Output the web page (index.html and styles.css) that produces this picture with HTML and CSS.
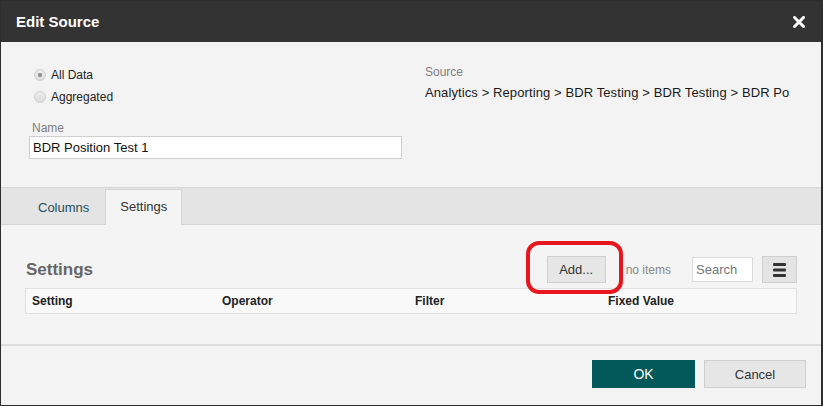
FILE: index.html
```html
<!DOCTYPE html>
<html>
<head>
<meta charset="utf-8">
<link rel="stylesheet" href="styles.css">
</head>
<body>
<div class="dialog">
  <div class="header">
    <span class="title">Edit Source</span>
    <svg class="close" width="12" height="12" viewBox="0 0 12 12"><path d="M1.5 1.5 L10.5 10.5 M10.5 1.5 L1.5 10.5" stroke="#fff" stroke-width="3" stroke-linecap="square"/></svg>
  </div>
  <div class="top">
    <div class="left">
      <div class="radio-row"><span class="radio checked"></span><span>All Data</span></div>
      <div class="radio-row"><span class="radio"></span><span>Aggregated</span></div>
      <div class="label name-label">Name</div>
      <div class="input name-input">BDR Position Test 1</div>
    </div>
    <div class="right">
      <div class="label">Source</div>
      <div class="path">Analytics &gt; Reporting &gt; BDR Testing &gt; BDR Testing &gt; BDR Position Test 1</div>
    </div>
  </div>
  <div class="tabs">
    <div class="tab">Columns</div>
    <div class="tab active">Settings</div>
  </div>
  <div class="content">
    <div class="toolbar">
      <div class="heading">Settings</div>
      <div class="add-wrap">
        <div class="btn add">Add...</div>
        <div class="annot"></div>
      </div>
      <div class="count">no items</div>
      <div class="search">Search</div>
      <div class="btn menu">
        <svg width="13" height="14" viewBox="0 0 13 14"><rect x="0" y="0" width="13" height="3" rx="1" fill="#333"/><rect x="0" y="5.5" width="13" height="3" rx="1" fill="#333"/><rect x="0" y="11" width="13" height="3" rx="1" fill="#333"/></svg>
      </div>
    </div>
    <div class="thead">
      <div class="th">Setting</div>
      <div class="th">Operator</div>
      <div class="th">Filter</div>
      <div class="th">Fixed Value</div>
    </div>
  </div>
  <div class="footer">
    <div class="btn ok">OK</div>
    <div class="btn cancel">Cancel</div>
  </div>
</div>
</body>
</html>
```

FILE: styles.css
```css
html, body {
  margin: 0;
  padding: 0;
  background: #2e2e2e;
  font-family: "Liberation Sans", Arial, sans-serif;
  color: #222;
}
.dialog {
  margin: 1px 0 0 1px;
  width: 820px;
  height: 404px;
  background: #f3f3f3;
  display: flex;
  flex-direction: column;
}
.header {
  height: 41px;
  flex: none;
  background: #333333;
  display: flex;
  align-items: center;
  justify-content: space-between;
  padding: 0 16px 0 15px;
}
.title {
  color: #fff;
  font-weight: bold;
  font-size: 15px;
}
.close { display: block; margin-top: 1px; }
.top {
  height: 145px;
  flex: none;
  display: flex;
}
.left {
  width: 373px;
  margin-left: 28px;
  padding-top: 22px;
}
.radio-row {
  height: 22px;
  display: flex;
  align-items: center;
  padding-left: 5px;
  font-size: 12px;
  color: #222;
}
.radio {
  width: 10px;
  height: 10px;
  border-radius: 50%;
  border: 1px solid #d0d0d0;
  background: linear-gradient(#ececec, #dcdcdc);
  margin-right: 5px;
  position: relative;
  flex: none;
}
.radio.checked::after {
  content: "";
  position: absolute;
  left: 3px;
  top: 3px;
  width: 4px;
  height: 4px;
  border-radius: 50%;
  background: #8a8a8a;
}
.label {
  font-size: 12px;
  color: #808080;
  line-height: 14px;
}
.name-label {
  margin-top: 13px;
  padding-left: 3px;
}
.input {
  background: #fff;
  border: 1px solid #cfcfcf;
  box-sizing: border-box;
}
.name-input {
  height: 23px;
  margin-top: 1px;
  font-size: 13px;
  line-height: 21px;
  padding-left: 3px;
  color: #111;
}
.right {
  margin-left: 23px;
  width: 365px;
  overflow: hidden;
  padding-top: 23px;
}
.path {
  margin-top: 6px;
  font-size: 13px;
  line-height: 16px;
  white-space: nowrap;
  letter-spacing: 0.1px;
  color: #1a1a1a;
}
.tabs {
  height: 36px;
  flex: none;
  background: #e4e4e4;
  border-top: 1px solid #d6d6d6;
  border-bottom: 1px solid #d6d6d6;
  display: flex;
  align-items: flex-end;
  padding-left: 21px;
}
.tab {
  height: 34px;
  box-sizing: border-box;
  padding: 0 15px;
  font-size: 13px;
  line-height: 34px;
  color: #1f4e5a;
  border: 1px solid transparent;
  border-bottom: none;
}
.tab.active {
  padding: 0 14px;
  background: #f4f4f4;
  border-color: #d4d4d4;
  color: #333;
  height: 36px;
  line-height: 33px;
  margin-bottom: -1px;
}
.content {
  flex: 1;
  background: #f4f4f4;
  padding: 31px 24px 0 24px;
  border-bottom: 2px solid #dedede;
}
.toolbar {
  display: flex;
  align-items: center;
  height: 27px;
}
.heading {
  flex: 1;
  font-size: 17px;
  font-weight: bold;
  color: #666;
  padding-left: 1px;
}
.btn {
  box-sizing: border-box;
  border: 1px solid #cfcfcf;
  background: #e6e6e6;
  font-size: 13px;
  color: #333;
  display: flex;
  align-items: center;
  justify-content: center;
}
.add-wrap {
  position: relative;
}
.add {
  width: 59px;
  height: 27px;
}
.annot {
  position: absolute;
  left: -21px;
  top: -15px;
  width: 97px;
  height: 53px;
  box-sizing: border-box;
  border: 4px solid #e8161f;
  border-radius: 13px;
}
.count {
  margin-left: 20px;
  font-size: 12px;
  color: #888;
  margin-right: 21px;
}
.search {
  width: 61px;
  height: 25px;
  box-sizing: border-box;
  background: #fff;
  border: 1px solid #dadada;
  font-size: 13px;
  color: #777;
  line-height: 23px;
  padding-left: 3px;
}
.menu {
  margin-left: 9px;
  width: 35px;
  height: 27px;
  background: #e4e4e4;
}
.menu svg { display: block; }
.thead {
  margin-top: 5px;
  height: 26px;
  box-sizing: border-box;
  background: #f9f9f9;
  border: 1px solid #e0e0e0;
  display: grid;
  grid-template-columns: 190px 193px 193px 1fr;
  align-items: center;
}
.th {
  font-size: 12px;
  font-weight: bold;
  color: #222;
  padding-left: 6px;
}
.footer {
  height: 59px;
  flex: none;
  display: flex;
  justify-content: flex-end;
  align-items: flex-start;
  padding: 14px 15px 0 0;
  box-sizing: border-box;
  background: #f3f3f3;
}
.ok {
  width: 103px;
  height: 28px;
  background: #035859;
  border-color: #035859;
  color: #fff;
  font-size: 14px;
}
.cancel {
  margin-left: 9px;
  width: 102px;
  height: 28px;
}
```
